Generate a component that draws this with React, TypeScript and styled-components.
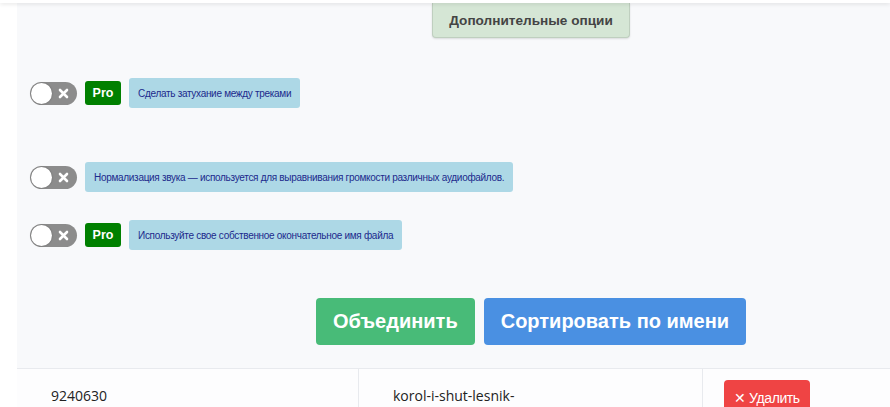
import React, { useState } from 'react'
import styled, { createGlobalStyle } from 'styled-components'

const GlobalStyle = createGlobalStyle`
  html, body {
    margin: 0;
    padding: 0;
    background: #ffffff;
    overflow: hidden;
    font-family: "Liberation Sans", Arial, sans-serif;
  }
`

const TopBar = styled.div`
  position: relative;
  z-index: 2;
  height: 3px;
  background: #ffffff;
  box-shadow: 0 1px 4px rgba(0, 0, 0, 0.12);
`

const Panel = styled.div`
  margin-left: 17px;
  width: 1028px;
  background: #f8f9fb;
`

const TabRow = styled.div`
  display: flex;
  justify-content: center;
`

const OptionsTab = styled.button`
  width: 198px;
  height: 35px;
  background: #d5e6d5;
  border: 1px solid #bfcfbf;
  border-top: none;
  border-radius: 0 0 4px 4px;
  color: #444444;
  font-family: "Liberation Sans", Arial, sans-serif;
  font-weight: bold;
  font-size: 13.6px;
  box-shadow: 0 1px 2px rgba(0, 0, 0, 0.12);
`

const OptionList = styled.div`
  display: flex;
  flex-direction: column;
  padding: 40px 13px 0;
`

const OptionRow = styled.div<{ $gap: number }>`
  display: flex;
  align-items: center;
  gap: 8px;
  margin-bottom: ${(p) => p.$gap}px;
`

const Toggle = styled.button<{ $on: boolean }>`
  position: relative;
  width: 47px;
  height: 23px;
  padding: 0;
  border: none;
  border-radius: 12px;
  background: ${(p) => (p.$on ? '#48bb78' : '#8c8c8c')};
  cursor: pointer;
  flex-shrink: 0;
`

const Knob = styled.span<{ $on: boolean }>`
  position: absolute;
  top: 1px;
  left: ${(p) => (p.$on ? '25px' : '1px')};
  width: 21px;
  height: 21px;
  border-radius: 50%;
  background: #ffffff;
  box-shadow: 0 0 2px rgba(0, 0, 0, 0.3);
`

const Cross = styled.svg`
  position: absolute;
  right: 8px;
  top: 6px;
`

const ProBadge = styled.span`
  display: flex;
  align-items: center;
  justify-content: center;
  width: 36px;
  height: 24px;
  border-radius: 3px;
  background: #008000;
  color: #ffffff;
  font-weight: bold;
  font-size: 12.5px;
`

const Hint = styled.div`
  display: flex;
  align-items: center;
  height: 30px;
  padding: 0 9px;
  border-radius: 3px;
  background: #add8e6;
  color: #1c2a8c;
  font-size: 10px;
  letter-spacing: -0.3px;
`

const ActionRow = styled.div`
  display: flex;
  justify-content: center;
  gap: 9px;
  padding: 48px 0 23px;
`

const ActionButton = styled.button<{ $color: string }>`
  height: 47px;
  padding: 0 17px;
  border: none;
  border-radius: 4px;
  background: ${(p) => p.$color};
  color: #ffffff;
  font-family: "Liberation Sans", Arial, sans-serif;
  font-weight: bold;
  font-size: 20px;
  cursor: pointer;
`

const Table = styled.div`
  display: grid;
  grid-template-columns: 342px 344px 342px;
  border-top: 1px solid #e8eaee;
  background: #fdfdfe;
`

const Cell = styled.div<{ $last?: boolean }>`
  padding: ${(p) => (p.$last ? '11px 0 0 21px' : '17px 0 0 34px')};
  height: 60px;
  border-right: ${(p) => (p.$last ? 'none' : '1px solid #e8eaee')};
  font-family: "Open Sans", sans-serif;
  font-size: 14px;
  color: #222222;
`

const DeleteButton = styled.button`
  height: 36px;
  padding: 0 10px;
  border: none;
  border-radius: 4px;
  background: #ef4444;
  color: #ffffff;
  font-family: "Liberation Sans", Arial, sans-serif;
  font-size: 14px;
  letter-spacing: -0.4px;
`

type Option = { text: string; pro: boolean; gap: number }

const options: Option[] = [
  { text: 'Сделать затухание между треками', pro: true, gap: 54 },
  { text: 'Нормализация звука — используется для выравнивания громкости различных аудиофайлов.', pro: false, gap: 28 },
  { text: 'Используйте свое собственное окончательное имя файла', pro: true, gap: 0 },
]

const App: React.FC = () => {
  const [enabled, setEnabled] = useState<boolean[]>([false, false, false])

  const flip = (i: number) => {
    setEnabled(enabled.map((v, j) => (j === i ? !v : v)))
  }

  return (
    <>
      <GlobalStyle />
      <TopBar />
      <Panel>
        <TabRow>
          <OptionsTab>Дополнительные опции</OptionsTab>
        </TabRow>
        <OptionList>
          {options.map((o, i) => (
            <OptionRow key={o.text} $gap={o.gap}>
              <Toggle $on={enabled[i]} onClick={() => flip(i)}>
                <Knob $on={enabled[i]} />
                {!enabled[i] && (
                  <Cross width="11" height="11" viewBox="0 0 11 11">
                    <path d="M2 2 L9 9 M9 2 L2 9" stroke="#fff" strokeWidth="2.6" strokeLinecap="round" />
                  </Cross>
                )}
              </Toggle>
              {o.pro && <ProBadge>Pro</ProBadge>}
              <Hint>{o.text}</Hint>
            </OptionRow>
          ))}
        </OptionList>
        <ActionRow>
          <ActionButton $color="#48bb78">Объединить</ActionButton>
          <ActionButton $color="#4a90e2">Сортировать по имени</ActionButton>
        </ActionRow>
        <Table>
          <Cell>9240630</Cell>
          <Cell>korol-i-shut-lesnik-</Cell>
          <Cell $last>
            <DeleteButton>✕ Удалить</DeleteButton>
          </Cell>
        </Table>
      </Panel>
    </>
  )
}

export default App
